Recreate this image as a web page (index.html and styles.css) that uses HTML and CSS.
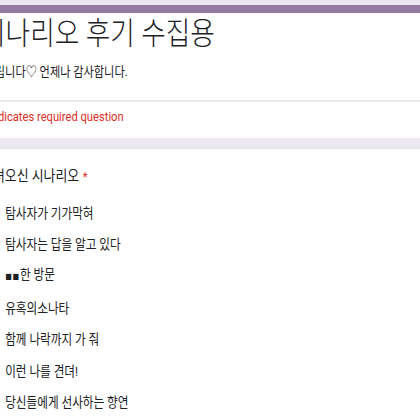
FILE: index.html
```html
<!DOCTYPE html>
<html lang="ko">
<head>
    <meta charset="UTF-8">
    <meta name="viewport" content="width=device-width, initial-scale=1.0">
    <title>시나리오 후기 수집용</title>
    <link rel="stylesheet" href="styles.css">
</head>
<body>
    <div class="page">
        <div class="card header-card">
            <div class="inner">
                <h1 class="form-title">시나리오 후기 수집용</h1>
                <p class="form-desc">드립니다♡ 언제나 감사합니다.</p>
            </div>
            <div class="divider"></div>
            <div class="inner">
                <p class="required-note">* Indicates required question</p>
            </div>
        </div>

        <div class="card question-card">
            <div class="inner">
                <div class="question-title">다녀오신 시나리오<span class="star">*</span></div>
                <div class="options">
                    <label class="option"><span class="radio"></span><span class="option-text">탐사자가 기가막혀</span></label>
                    <label class="option"><span class="radio"></span><span class="option-text">탐사자는 답을 알고 있다</span></label>
                    <label class="option"><span class="radio"></span><span class="option-text"><span class="squares">■■</span>한 방문</span></label>
                    <label class="option"><span class="radio"></span><span class="option-text">유혹의소나타</span></label>
                    <label class="option"><span class="radio"></span><span class="option-text">함께 나락까지 가 줘</span></label>
                    <label class="option"><span class="radio"></span><span class="option-text">이런 나를 견뎌!</span></label>
                    <label class="option"><span class="radio"></span><span class="option-text">당신들에게 선사하는 향연</span></label>
                </div>
            </div>
        </div>
    </div>
</body>
</html>
```

FILE: styles.css
```css
body {
    margin: 0;
    padding: 0;
    background-color: #ebe7ef;
    font-family: Roboto, "Noto Sans CJK KR", sans-serif;
    color: #202124;
    overflow: hidden;
    height: 420px;
}

.page {
    width: 489px;
    padding-top: 5px;
    transform: scaleX(0.86);
    transform-origin: 0 0;
}

.card {
    background-color: #ffffff;
}

.header-card {
    border-top: 8px solid #937aa3;
    padding-top: 2px;
    padding-bottom: 11px;
}

.inner {
    margin-left: -22px;
}

.form-title {
    margin: 0;
    font-size: 31px;
    font-weight: 300;
    line-height: 38px;
}

.form-desc {
    margin: 9px 0 0 4px;
    font-size: 13px;
    line-height: 20px;
}

.divider {
    height: 2px;
    background-color: #ececee;
    margin-top: 18px;
}

.required-note {
    margin: 5px 0 0;
    font-size: 13px;
    line-height: 20px;
    color: #d93025;
}

.question-card {
    margin-top: 10px;
    border-top: 1px solid #e4e1e8;
    padding-top: 16px;
    height: 300px;
}

.question-title {
    font-size: 15px;
    line-height: 22px;
}

.star {
    color: #d93025;
    margin-left: 4px;
    font-size: 13px;
}

.options {
    display: flex;
    flex-direction: column;
    margin-top: 9px;
}

.option {
    display: flex;
    align-items: center;
    gap: 10px;
    height: 31.6px;
    font-size: 13.5px;
    line-height: 20px;
}

.radio {
    width: 14px;
    height: 14px;
    border: 2px solid #5f6368;
    border-radius: 50%;
    flex-shrink: 0;
}

.squares {
    font-family: "DejaVu Sans", sans-serif;
    font-size: 8px;
    letter-spacing: 1px;
}
```
